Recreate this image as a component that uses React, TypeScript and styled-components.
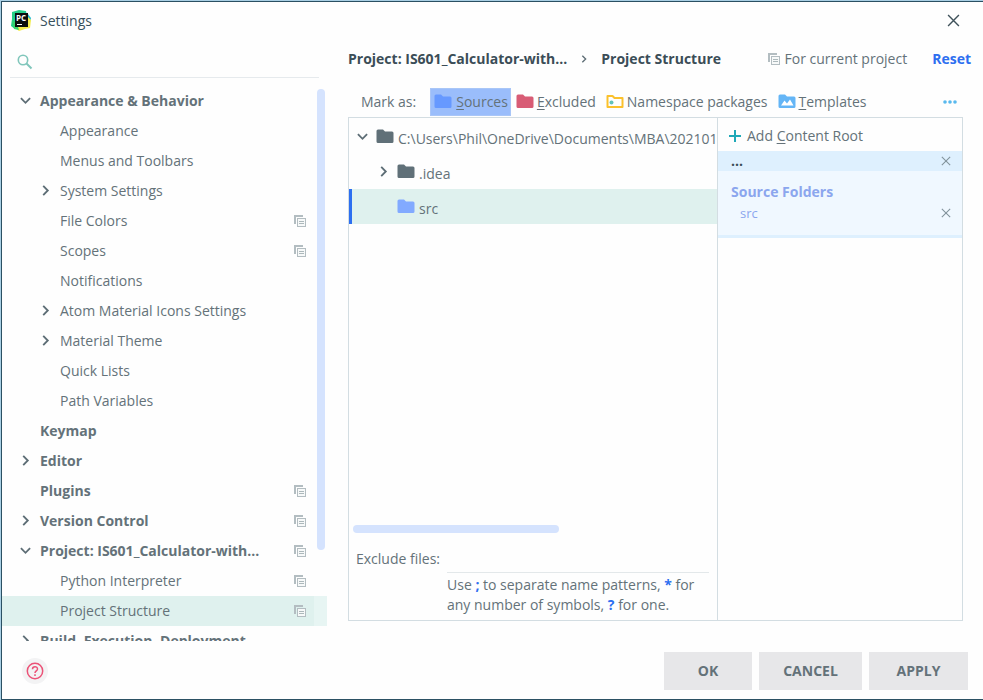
import React from "react";
import styled, { createGlobalStyle, css } from "styled-components";

const GlobalStyle = createGlobalStyle`
  * { box-sizing: border-box; }
  body {
    margin: 0;
    background: #a9cfe4;
    color: #647279;
    font: 14px/20px "Open Sans", "Noto Sans", sans-serif;
  }
  button, input { font: inherit; color: inherit; border: 0; padding: 0; background: none; }
  ul { list-style: none; margin: 0; padding: 0; }
`;

const Desktop = styled.div`
  height: 100vh;
  padding: 1px 0 0 1px;
`;

const Dialog = styled.div`
  height: 100%;
  display: flex;
  flex-direction: column;
  background: #fefefe;
  border: 1px solid #2b5063;
  border-right: 0;
`;

const TitleBar = styled.header`
  display: flex;
  align-items: center;
  height: 37px;
  padding: 0 23px 0 9px;
  gap: 8px;
  color: #37505c;
  flex: none;
`;

const Title = styled.h1`
  flex: 1;
  margin: 0;
  font-size: 14px;
  line-height: 20px;
  font-weight: 400;
`;

const IconButton = styled.button`
  display: flex;
  align-items: center;
  justify-content: center;
  flex: none;
`;

const Content = styled.div`
  flex: 1;
  min-height: 0;
  display: flex;
  gap: 21px;
`;

const Sidebar = styled.aside`
  flex: 0 1 325px;
  min-width: 0;
  display: flex;
  flex-direction: column;
`;

const Search = styled.label`
  display: flex;
  align-items: center;
  gap: 8px;
  height: 39px;
  margin: 0 8px;
  padding: 8px 0 0 7px;
  border-bottom: 1px solid #e6eaed;
`;

const TextBox = styled.input`
  flex: 1;
  min-width: 0;
  outline: 0;
`;

const TreeArea = styled.nav`
  position: relative;
  flex: 1;
  min-height: 0;
  margin-top: 8px;
  overflow: hidden;
`;

const VerticalThumb = styled.div`
  position: absolute;
  top: 3px;
  right: 2px;
  width: 8px;
  height: 83%;
  border-radius: 4px;
  background: #d5e3fe;
`;

const NavRow = styled.li<{ $level: number; $bold?: boolean; $selected?: boolean }>`
  display: flex;
  align-items: center;
  height: 30px;
  padding-right: 21px;
  padding-left: ${(p) => (p.$level === 0 ? 17 : 37)}px;
  font-weight: ${(p) => (p.$bold ? 700 : 400)};
  background: ${(p) => (p.$selected ? "linear-gradient(to left, #e7f5f3 13px, #dff1ee 13px)" : "none")};
`;

const NavButton = styled.button`
  flex: 1;
  min-width: 0;
  display: flex;
  align-items: center;
  gap: 8px;
  text-align: left;
  white-space: nowrap;
  line-height: 30px;
`;

const ArrowSlot = styled.span`
  display: flex;
  justify-content: center;
  flex: none;
  width: 13px;
  padding-bottom: 2px;
`;

const Main = styled.main`
  flex: 1;
  min-width: 0;
  display: flex;
  flex-direction: column;
  padding-bottom: 20px;
`;

const Breadcrumbs = styled.div`
  display: flex;
  align-items: center;
  height: 40px;
  padding-right: 12px;
  white-space: nowrap;
`;

const Crumb = styled.strong`
  color: #3b4d57;
`;

const CrumbArrow = styled.span`
  display: flex;
  justify-content: center;
  width: 34px;
`;

const Scope = styled.span`
  display: flex;
  align-items: center;
  gap: 5px;
  margin-left: auto;
`;

const ResetLink = styled.a`
  margin-left: 25px;
  color: #2d6ff0;
  font-weight: 700;
  text-decoration: none;
`;

const MarkBar = styled.div`
  display: flex;
  align-items: center;
  height: 29px;
  margin: 8px 20px 1px 0;
  padding-left: 13px;
  gap: 2px;
  white-space: nowrap;
`;

const MarkLabel = styled.span`
  margin-right: 12px;
`;

const MarkButton = styled.button<{ $active?: boolean }>`
  display: flex;
  align-items: center;
  height: 28px;
  ${(p) =>
    p.$active
      ? css`
          gap: 4px;
          padding: 0 2px 0 3px;
          background: #9abdfb;
          border: 1px solid #a9c6f7;
        `
      : css`
          gap: 3px;
          padding: 0 5px 0 3px;
        `}
`;

const Key = styled.u`
  text-underline-offset: 2px;
`;

const MoreButton = styled(IconButton)`
  margin-left: auto;
  padding: 8px 6px;
`;

const Split = styled.div`
  flex: 1;
  min-height: 0;
  display: grid;
  grid-template-columns: minmax(0, 1fr) 244px;
  margin-right: 20px;
  border: 1px solid #d3dde2;
`;

const FilesPane = styled.section`
  min-width: 0;
  display: flex;
  flex-direction: column;
  border-right: 1px solid #d3dde2;
`;

const FileList = styled.ul`
  flex: 1;
  padding-top: 1px;
`;

const FileRow = styled.li<{ $depth: number; $selected?: boolean }>`
  display: flex;
  align-items: center;
  height: 35px;
  gap: 4px;
  padding-left: ${(p) => 4 + p.$depth * 21}px;
  border-left: 3px solid ${(p) => (p.$selected ? "#2d6ff0" : "transparent")};
  background: ${(p) => (p.$selected ? "#dff1ee" : "none")};
  background-clip: padding-box;
  white-space: nowrap;
  overflow: hidden;

  svg { flex: none; }
`;

const FileName = styled.span`
  padding-top: 4px;
`;

const FileArrow = styled(ArrowSlot)`
  margin-right: 3px;
  padding-bottom: 0;
`;

const HorizontalThumb = styled.div`
  width: 56%;
  height: 8px;
  margin-left: 4px;
  border-radius: 4px;
  background: #d5e3fe;
`;

const ExcludeForm = styled.div`
  display: grid;
  grid-template-columns: auto 1fr;
  column-gap: 7px;
  padding: 13px 8px 5px 7px;
`;

const ExcludeInput = styled(TextBox)`
  height: 27px;
  border-bottom: 1px solid #e3e8ea;
`;

const ExcludeLabel = styled.label`
  line-height: 26px;
`;

const Hint = styled.p`
  grid-column: 2;
  margin: 2px 0 0;

  b { color: #2d6ff0; }
`;

const RootsPane = styled.section`
  min-width: 0;
`;

const AddRoot = styled.button`
  display: flex;
  align-items: center;
  gap: 6px;
  height: 33px;
  padding: 2px 11px 0;
`;

const RootHeader = styled.div`
  display: flex;
  align-items: center;
  justify-content: space-between;
  height: 20px;
  padding: 0 11px 0 13px;
  background: #def0fe;
`;

const RootBody = styled.div`
  padding: 10px 11px 11px 13px;
  background: #f0f8ff;
  border-bottom: 3px solid #def0fe;
  color: #8ba6ee;
`;

const RootTitle = styled.h2`
  margin: 0;
  font-size: 14px;
  line-height: 22px;
`;

const RootItem = styled.div`
  display: flex;
  align-items: center;
  justify-content: space-between;
  height: 21px;
  padding: 0 0 1px 9px;
  font-size: 13px;
`;

const Footer = styled.footer`
  display: flex;
  align-items: center;
  flex: none;
  height: 58px;
  gap: 7px;
  padding: 2px 15px 0 20px;
`;

const HelpButton = styled(IconButton)`
  width: 26px;
  height: 26px;
  margin-right: auto;
  border-radius: 50%;
  background: #f3f3f4;
`;

const ActionButton = styled.button<{ $width: number }>`
  width: ${(p) => p.$width}px;
  height: 38px;
  background: #e7e7e9;
  font-weight: 700;
`;

function Chevron({ open, small }: { open?: boolean; small?: boolean }) {
  const size = small ? 8 : 11;
  return (
    <svg width={size} height={size} viewBox="0 0 12 12" fill="none" stroke="#5d6d75" strokeWidth="2">
      <path d={open ? "M1 3.5 6 8.5 11 3.5" : "M3.5 1 8.5 6 3.5 11"} />
    </svg>
  );
}

function CopyIcon() {
  return (
    <svg width="12" height="12" viewBox="0 0 12 12" fill="none">
      <path d="M0 0h9v2H2v7H0z" fill="#b3bdc1" />
      <path d="M3 3h9v9H3z" fill="#b3bdc1" />
      <path d="M4 4h7v7H4z" fill="#f7f9f9" />
      <path d="M5 6.500h5M5 8.500h5" stroke="#acb8bb" />
    </svg>
  );
}

type FolderKind = "solid" | "outline" | "image";

function FolderIcon({ color, kind = "solid" }: { color: string; kind?: FolderKind }) {
  return (
    <svg width="18" height="15" viewBox="0 0 18 15" fill="none">
      {kind === "outline" ? (
        <>
          <path d="M1.5 2h5l2 2h8v9h-15z" stroke={color} strokeWidth="2" strokeLinejoin="round" />
          <circle cx="5.5" cy="8.5" r="2" fill="#62c2bb" />
        </>
      ) : (
        <path d="M2 0.5h5l2 2h7q1.500 0 1.500 1.500v8.500q0 1.500-1.500 1.500H2Q.5 14 .5 12.500V2Q.5.500 2 .5z" fill={color} />
      )}
      {kind === "image" && <path d="M3 11.500 6.500 6.500 9 9.500 12 5.500l3.500 6z" fill="#fff" />}
    </svg>
  );
}

function CloseIcon({ size, color }: { size: number; color: string }) {
  return (
    <svg width={size} height={size} viewBox="0 0 12 12" stroke={color} strokeWidth="1.3">
      <path d="M1 1 11 11M11 1 1 11" />
    </svg>
  );
}

function AppLogo() {
  return (
    <svg width="21" height="21" viewBox="0 0 21 21">
      <path d="M1 2 8 0l7 1 1 8-5 8-7 2-4-3 1-7z" fill="#24cf87" />
      <path d="M14 2l3 2 3 4-1 4-5-6z" fill="#22b9d2" />
      <path d="M17 7l3 3-1 8-5 1-6 2-4-3 8-5z" fill="#f3ed4d" />
      <path d="M1 10l5 4 2 6-5-1z" fill="#38d36c" />
      <path d="M4 3h13v14H4z" fill="#090d0c" />
      <path d="M6 14.500h5" stroke="#fff" />
      <text x="5" y="11" fill="#fff" fontSize="8" fontWeight="700" fontFamily="Open Sans, sans-serif">PC</text>
    </svg>
  );
}

interface NavItem {
  label: string;
  level: number;
  arrow?: "open" | "closed";
  copy?: boolean;
  selected?: boolean;
}

const navItems: NavItem[] = [
  { label: "Appearance & Behavior", level: 0, arrow: "open" },
  { label: "Appearance", level: 1 },
  { label: "Menus and Toolbars", level: 1 },
  { label: "System Settings", level: 1, arrow: "closed" },
  { label: "File Colors", level: 1, copy: true },
  { label: "Scopes", level: 1, copy: true },
  { label: "Notifications", level: 1 },
  { label: "Atom Material Icons Settings", level: 1, arrow: "closed" },
  { label: "Material Theme", level: 1, arrow: "closed" },
  { label: "Quick Lists", level: 1 },
  { label: "Path Variables", level: 1 },
  { label: "Keymap", level: 0 },
  { label: "Editor", level: 0, arrow: "closed" },
  { label: "Plugins", level: 0, copy: true },
  { label: "Version Control", level: 0, arrow: "closed", copy: true },
  { label: "Project: IS601_Calculator-with...", level: 0, arrow: "open", copy: true },
  { label: "Python Interpreter", level: 1, copy: true },
  { label: "Project Structure", level: 1, copy: true, selected: true },
  { label: "Build, Execution, Deployment", level: 0, arrow: "closed" },
];

export default function App() {
  return (
    <Desktop>
      <GlobalStyle />
      <Dialog role="dialog" aria-label="Settings">
        <TitleBar>
          <AppLogo />
          <Title>Settings</Title>
          <IconButton aria-label="Close">
            <CloseIcon size={13} color="#40525b" />
          </IconButton>
        </TitleBar>

        <Content>
          <Sidebar>
            <Search>
              <svg width="16" height="16" viewBox="0 0 16 16" fill="none" stroke="#80c6bb">
                <circle cx="6" cy="6" r="4.700" strokeWidth="1.600" />
                <path d="m9.500 9.500 5 5" strokeWidth="2" />
              </svg>
              <TextBox aria-label="Search settings" />
            </Search>
            <TreeArea>
              <ul>
                {navItems.map((item) => (
                  <NavRow key={item.label} $level={item.level} $bold={item.level === 0} $selected={item.selected}>
                    <NavButton>
                      <ArrowSlot>{item.arrow && <Chevron open={item.arrow === "open"} />}</ArrowSlot>
                      {item.label}
                    </NavButton>
                    {item.copy && <CopyIcon />}
                  </NavRow>
                ))}
              </ul>
              <VerticalThumb />
            </TreeArea>
          </Sidebar>

          <Main>
            <Breadcrumbs>
              <Crumb>Project: IS601_Calculator-with...</Crumb>
              <CrumbArrow><Chevron small /></CrumbArrow>
              <Crumb>Project Structure</Crumb>
              <Scope><CopyIcon />For current project</Scope>
              <ResetLink href="#reset">Reset</ResetLink>
            </Breadcrumbs>

            <MarkBar>
              <MarkLabel>Mark as:</MarkLabel>
              <MarkButton $active>
                <FolderIcon color="#6699ff" />
                <span><Key>S</Key>ources</span>
              </MarkButton>
              <MarkButton>
                <FolderIcon color="#d85c75" />
                <span><Key>E</Key>xcluded</span>
              </MarkButton>
              <MarkButton>
                <FolderIcon color="#fbc12d" kind="outline" />
                Namespace packages
              </MarkButton>
              <MarkButton>
                <FolderIcon color="#64b5f6" kind="image" />
                <span><Key>T</Key>emplates</span>
              </MarkButton>
              <MoreButton aria-label="More">
                <svg width="14" height="4" viewBox="0 0 14 4" fill="#59b9ee">
                  <circle cx="2" cy="2" r="1.800" />
                  <circle cx="7" cy="2" r="1.800" />
                  <circle cx="12" cy="2" r="1.800" />
                </svg>
              </MoreButton>
            </MarkBar>

            <Split>
              <FilesPane>
                <FileList>
                  <FileRow $depth={0}>
                    <FileArrow><Chevron open /></FileArrow>
                    <FolderIcon color="#607078" />
                    <FileName>C:\Users\Phil\OneDrive\Documents\MBA\202101</FileName>
                  </FileRow>
                  <FileRow $depth={1}>
                    <FileArrow><Chevron /></FileArrow>
                    <FolderIcon color="#607078" />
                    <FileName>.idea</FileName>
                  </FileRow>
                  <FileRow $depth={1} $selected>
                    <FileArrow />
                    <FolderIcon color="#82aaff" />
                    <FileName>src</FileName>
                  </FileRow>
                </FileList>
                <HorizontalThumb />
                <ExcludeForm>
                  <ExcludeLabel htmlFor="exclude">Exclude files:</ExcludeLabel>
                  <ExcludeInput id="exclude" />
                  <Hint>
                    Use <b>;</b> to separate name patterns, <b>*</b> for any number of symbols, <b>?</b> for one.
                  </Hint>
                </ExcludeForm>
              </FilesPane>

              <RootsPane>
                <AddRoot>
                  <svg width="12" height="12" viewBox="0 0 12 12" stroke="#20a9b8" strokeWidth="2">
                    <path d="M6 0v12M0 6h12" />
                  </svg>
                  <span>Add <Key>C</Key>ontent Root</span>
                </AddRoot>
                <RootHeader>
                  <Crumb>...</Crumb>
                  <IconButton aria-label="Remove content root"><CloseIcon size={10} color="#82939c" /></IconButton>
                </RootHeader>
                <RootBody>
                  <RootTitle>Source Folders</RootTitle>
                  <RootItem>
                    src
                    <IconButton aria-label="Remove src"><CloseIcon size={10} color="#82939c" /></IconButton>
                  </RootItem>
                </RootBody>
              </RootsPane>
            </Split>
          </Main>
        </Content>

        <Footer>
          <HelpButton aria-label="Help">
            <svg width="18" height="18" viewBox="0 0 18 18" fill="none" stroke="#eb5277" strokeWidth="1.500">
              <circle cx="9" cy="9" r="7.700" />
              <path d="M6.500 7.200c0-3.400 5-3.200 5-.3 0 1.900-2.500 2-2.500 4.100M9 12.300V14" />
            </svg>
          </HelpButton>
          <ActionButton $width={88}>OK</ActionButton>
          <ActionButton $width={103}>CANCEL</ActionButton>
          <ActionButton $width={99}>APPLY</ActionButton>
        </Footer>
      </Dialog>
    </Desktop>
  );
}
